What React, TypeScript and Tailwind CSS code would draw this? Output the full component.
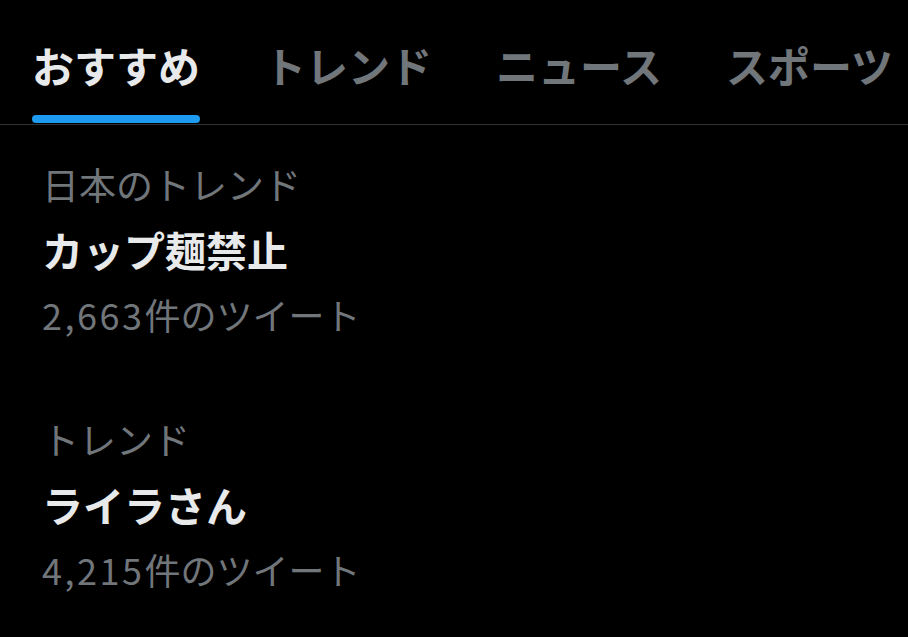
import React from 'react';

const TABS = ['おすすめ', 'トレンド', 'ニュース', 'スポーツ'];

const TRENDS = [
  { label: '日本のトレンド', title: 'カップ麺禁止', num: '2,663', suffix: '件のツイート' },
  { label: 'トレンド', title: 'ライラさん', num: '4,215', suffix: '件のツイート' },
];

export default function App() {
  return (
    <div
      className="w-[908px] h-[637px] overflow-hidden bg-black"
      style={{ fontFamily: '"Noto Sans CJK JP", "Noto Sans", sans-serif' }}
    >
      {/* Tabs */}
      <div className="flex h-[125px] gap-[64px] border-b border-[#2f3336] pl-[32px] whitespace-nowrap">
        {TABS.map((tab, i) => (
          <div key={tab} className="flex flex-col">
            <div
              className={`pt-[40px] text-[42px] leading-[50px] font-bold ${
                i === 0 ? 'text-[#e7e9ea]' : 'text-[#71767b]'
              }`}
            >
              {tab}
            </div>
            {i === 0 && <div className="mt-[25px] h-[8px] rounded-full bg-[#1d9bf0]" />}
          </div>
        ))}
      </div>

      {/* Trend list */}
      <div className="flex flex-col gap-[60px] pl-[42px] pt-[27px]">
        {TRENDS.map((t) => (
          <div key={t.title} className="flex flex-col">
            <div className="text-[37px] leading-[65px] text-[#71767b]">{t.label}</div>
            <div className="text-[41px] leading-[65px] font-bold text-[#e7e9ea]">{t.title}</div>
            <div className="text-[36px] leading-[65px] text-[#71767b] whitespace-nowrap">
              <span className="tracking-[2.5px]">{t.num}</span>
              {t.suffix}
            </div>
          </div>
        ))}
      </div>
    </div>
  );
}
